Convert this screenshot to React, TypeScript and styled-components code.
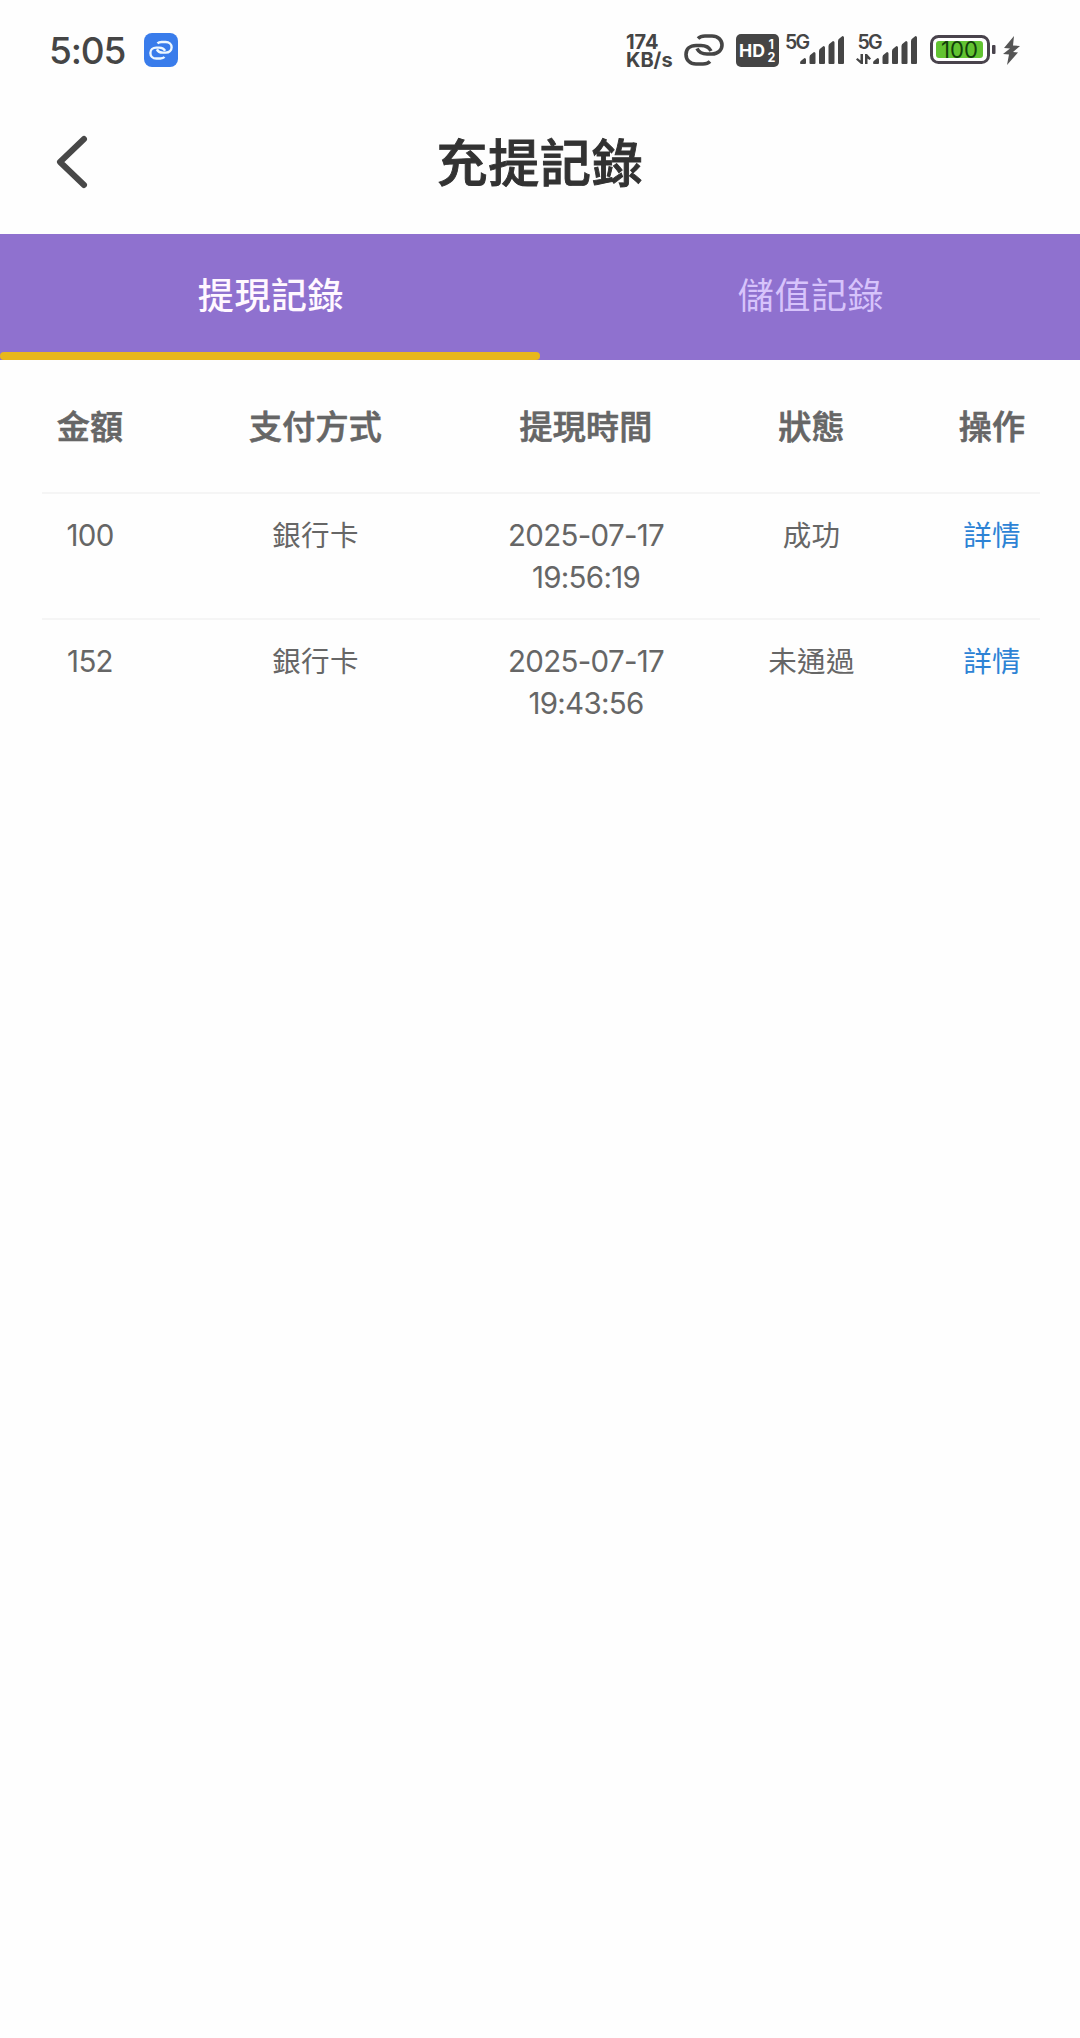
import React, { useState } from "react";
import styled, { createGlobalStyle } from "styled-components";

const cjk = `"Noto Sans CJK TC", "Noto Sans CJK SC", sans-serif`;
const ink = "#454545";

const GlobalStyle = createGlobalStyle`
  * { box-sizing: border-box; }
  body { margin: 0; background: #fefefe; font-family: ${cjk}; }
`;

const Screen = styled.div`
  display: flex;
  flex-direction: column;
  width: 1080px;
  min-height: 2038px;
  background: #fefefe;
`;

const StatusBar = styled.header`
  display: flex;
  justify-content: space-between;
  height: 100px;
  padding: 0 60px 0 49px;
  color: ${ink};
`;

const StatusGroup = styled.div`
  display: flex;
  align-items: center;
`;

const Clock = styled.span`
  width: 95px;
  font: 500 37px/50px Inter, sans-serif;
  letter-spacing: -1.2px;
  padding-top: 1px;
  white-space: nowrap;
`;

const Speed = styled.div`
  width: 58px;
  padding-top: 2px;
  font: 700 20px/18px Inter, sans-serif;
  letter-spacing: 0;
  white-space: nowrap;
`;

const Icon = styled.svg<{ $gap?: number }>`
  display: block;
  flex: none;
  overflow: visible;
  margin-right: ${(p) => p.$gap ?? 0}px;
`;

const SvgText = styled.text`
  font-family: Inter, sans-serif;
`;

const TitleBar = styled.div`
  display: grid;
  grid-template-columns: 140px 1fr 140px;
  align-items: center;
  height: 134px;
  padding-bottom: 10px;
`;

const BackButton = styled.button`
  display: flex;
  padding: 0 0 0 56px;
  border: 0;
  background: none;
`;

const Title = styled.h1`
  margin: 0;
  padding-bottom: 4px;
  text-align: center;
  color: #323232;
  font: 500 51px/74px ${cjk};
  letter-spacing: 0.7px;
  -webkit-text-stroke: 0.9px #323232;
`;

const Tabs = styled.nav`
  display: grid;
  grid-template-columns: 1fr 1fr;
  height: 126px;
  background: #8f71cf;
`;

const Tab = styled.button<{ $active: boolean }>`
  display: flex;
  flex-direction: column;
  align-items: stretch;
  justify-content: space-between;
  padding: 0;
  border: 0;
  background: none;
  color: ${(p) => (p.$active ? "#fff8ff" : "#d7c3fb")};
  font: ${(p) => (p.$active ? 500 : 400)} 36px/118px ${cjk};
  letter-spacing: 0.6px;
  text-indent: 2px;

  &::after {
    content: "";
    height: 8px;
    border-radius: 4px;
    background: ${(p) => (p.$active ? "#e8b71c" : "transparent")};
  }
`;

const Table = styled.section`
  padding: 0 40px 0 42px;
  color: #666;
`;

const Row = styled.div<{ $head?: boolean }>`
  display: grid;
  grid-template-columns: 96px 355px 186px 265px 96px;
  align-items: ${(p) => (p.$head ? "center" : "start")};
  height: ${(p) => (p.$head ? "132px" : "126px")};
  padding: ${(p) => (p.$head ? "0 0 3px" : "20px 0")};
  border-top: ${(p) => (p.$head ? "0" : "2px solid #f5f5f5")};
  text-align: center;
`;

const HeadCell = styled.div`
  font: 500 33px/48px ${cjk};
  letter-spacing: 0.3px;
  -webkit-text-stroke: 0.7px #666;
  white-space: nowrap;
`;

const Cell = styled.div`
  font: 400 28.5px/40px ${cjk};
  letter-spacing: 0.3px;
`;

const NumberCell = styled(Cell)`
  font: 400 29.5px/42px Inter, sans-serif;
  letter-spacing: -0.7px;
`;

const DetailLink = styled.a`
  color: #2d83d5;
`;

const LinkLoops = () => (
  <>
    <path d="M14 4.500C16 2.500 18 2 21 2H28C34 2 38 6 38 11S34 20 28 20H23C18 20 15 18.500 13 14.500" />
    <path d="M26 27.500C24 29.500 22 30 19 30H12C6 30 2 26 2 20.500S6 11.500 12 11.500H17C22 11.500 25 13 27 17" />
  </>
);

const Signal = ({ data }: { data?: boolean }) => {
  const x = data ? 17 : 15;
  return (
    <Icon width={data ? 62 : 60} height="34" $gap={data ? 12 : 11} fill={ink}>
      <SvgText x={data ? 1.5 : 0} y="15.500" fontSize="19.500" fontWeight="600" textLength="25">5G</SvgText>
      {[25, 19, 13, 8, 3].map((top, i) => {
        const left = x + i * 9.5;
        return (
          <path
            key={top}
            d={`M${left} ${top + 5}Q${left} ${top + 3} ${left + 2} ${top + 2}L${left + 4.5} ${top}Q${left + 6} ${top} ${left + 6} ${top + 1.5}V30Q${left + 6} 31 ${left + 5} 31H${left + 1}Q${left} 31 ${left} 30Z`}
          />
        );
      })}
      {data && <path d="M4.500 21H7V31H5L0 26.500L1.500 25L4.500 27.500ZM9 31V21H11L15 25.500L13.500 27L11.500 25.500V31Z" />}
    </Icon>
  );
};

const records = [
  { amount: "100", method: "銀行卡", date: "2025-07-17", time: "19:56:19", status: "成功" },
  { amount: "152", method: "銀行卡", date: "2025-07-17", time: "19:43:56", status: "未通過" },
];

export default function App() {
  const [tab, setTab] = useState(0);
  return (
    <Screen>
      <GlobalStyle />
      <StatusBar>
        <StatusGroup>
          <Clock>5:05</Clock>
          <Icon width="34" height="34" viewBox="0 0 34 34">
            <rect width="34" height="34" rx="8" fill="#397ceb" />
            <g transform="translate(5.200 7.800) scale(.59)" fill="none" stroke="#eef8ff" strokeWidth="4">
              <LinkLoops />
            </g>
          </Icon>
        </StatusGroup>
        <StatusGroup>
          <Speed>174<br />KB/s</Speed>
          <Icon width="40" height="32" viewBox="0 0 40 32" $gap={12} fill="none" stroke={ink} strokeWidth="3.600">
            <LinkLoops />
          </Icon>
          <Icon width="43" height="33" viewBox="0 0 43 33" $gap={6}>
            <rect width="43" height="33" rx="5" fill={ink} />
            <SvgText x="3" y="23" fontSize="18" fontWeight="700" fill="#fff" textLength="26" lengthAdjust="spacingAndGlyphs">HD</SvgText>
            <SvgText x="32.500" y="14.500" fontSize="12.500" fontWeight="700" fill="#fff">1</SvgText>
            <SvgText x="31.500" y="28" fontSize="12.500" fontWeight="700" fill="#fff">2</SvgText>
          </Icon>
          <Signal />
          <Signal data />
          <Icon width="66" height="30" viewBox="0 0 66 30" $gap={7}>
            <rect x="1.500" y="1.500" width="57" height="26" rx="7" fill="#fff" stroke="#49434c" strokeWidth="3" />
            <rect x="6" y="6" width="47" height="17" rx="3" fill="#62c332" />
            <rect x="62" y="10" width="3.500" height="9" rx="1" fill="#49434c" />
            <SvgText x="29.500" y="22.600" fontSize="22.500" fontWeight="400" textAnchor="middle" textLength="37" lengthAdjust="spacingAndGlyphs" fill="#123f0c">100</SvgText>
          </Icon>
          <Icon width="17" height="29" viewBox="0 0 17 29">
            <path d="M11 0L1 12L7 12.500L0 18L6 18.500L4 29L15 16.500L10 16L17 10L10 9.500Z" fill="#555" />
          </Icon>
        </StatusGroup>
      </StatusBar>
      <TitleBar>
        <BackButton aria-label="返回">
          <Icon width="32" height="54" viewBox="0 0 32 54" fill="none" stroke="#484848" strokeWidth="6" strokeLinecap="round" strokeLinejoin="round">
            <path d="M28 4L4 27L28 50" />
          </Icon>
        </BackButton>
        <Title>充提記錄</Title>
      </TitleBar>
      <Tabs>
        {["提現記錄", "儲值記錄"].map((label, i) => (
          <Tab key={label} $active={tab === i} onClick={() => setTab(i)}>{label}</Tab>
        ))}
      </Tabs>
      <Table>
        <Row $head>
          {["金額", "支付方式", "提現時間", "狀態", "操作"].map((h) => (
            <HeadCell key={h}>{h}</HeadCell>
          ))}
        </Row>
        {records.map((r) => (
          <Row key={r.time}>
            <NumberCell>{r.amount}</NumberCell>
            <Cell>{r.method}</Cell>
            <NumberCell>{r.date}<br />{r.time}</NumberCell>
            <Cell>{r.status}</Cell>
            <Cell><DetailLink>詳情</DetailLink></Cell>
          </Row>
        ))}
      </Table>
    </Screen>
  );
}
